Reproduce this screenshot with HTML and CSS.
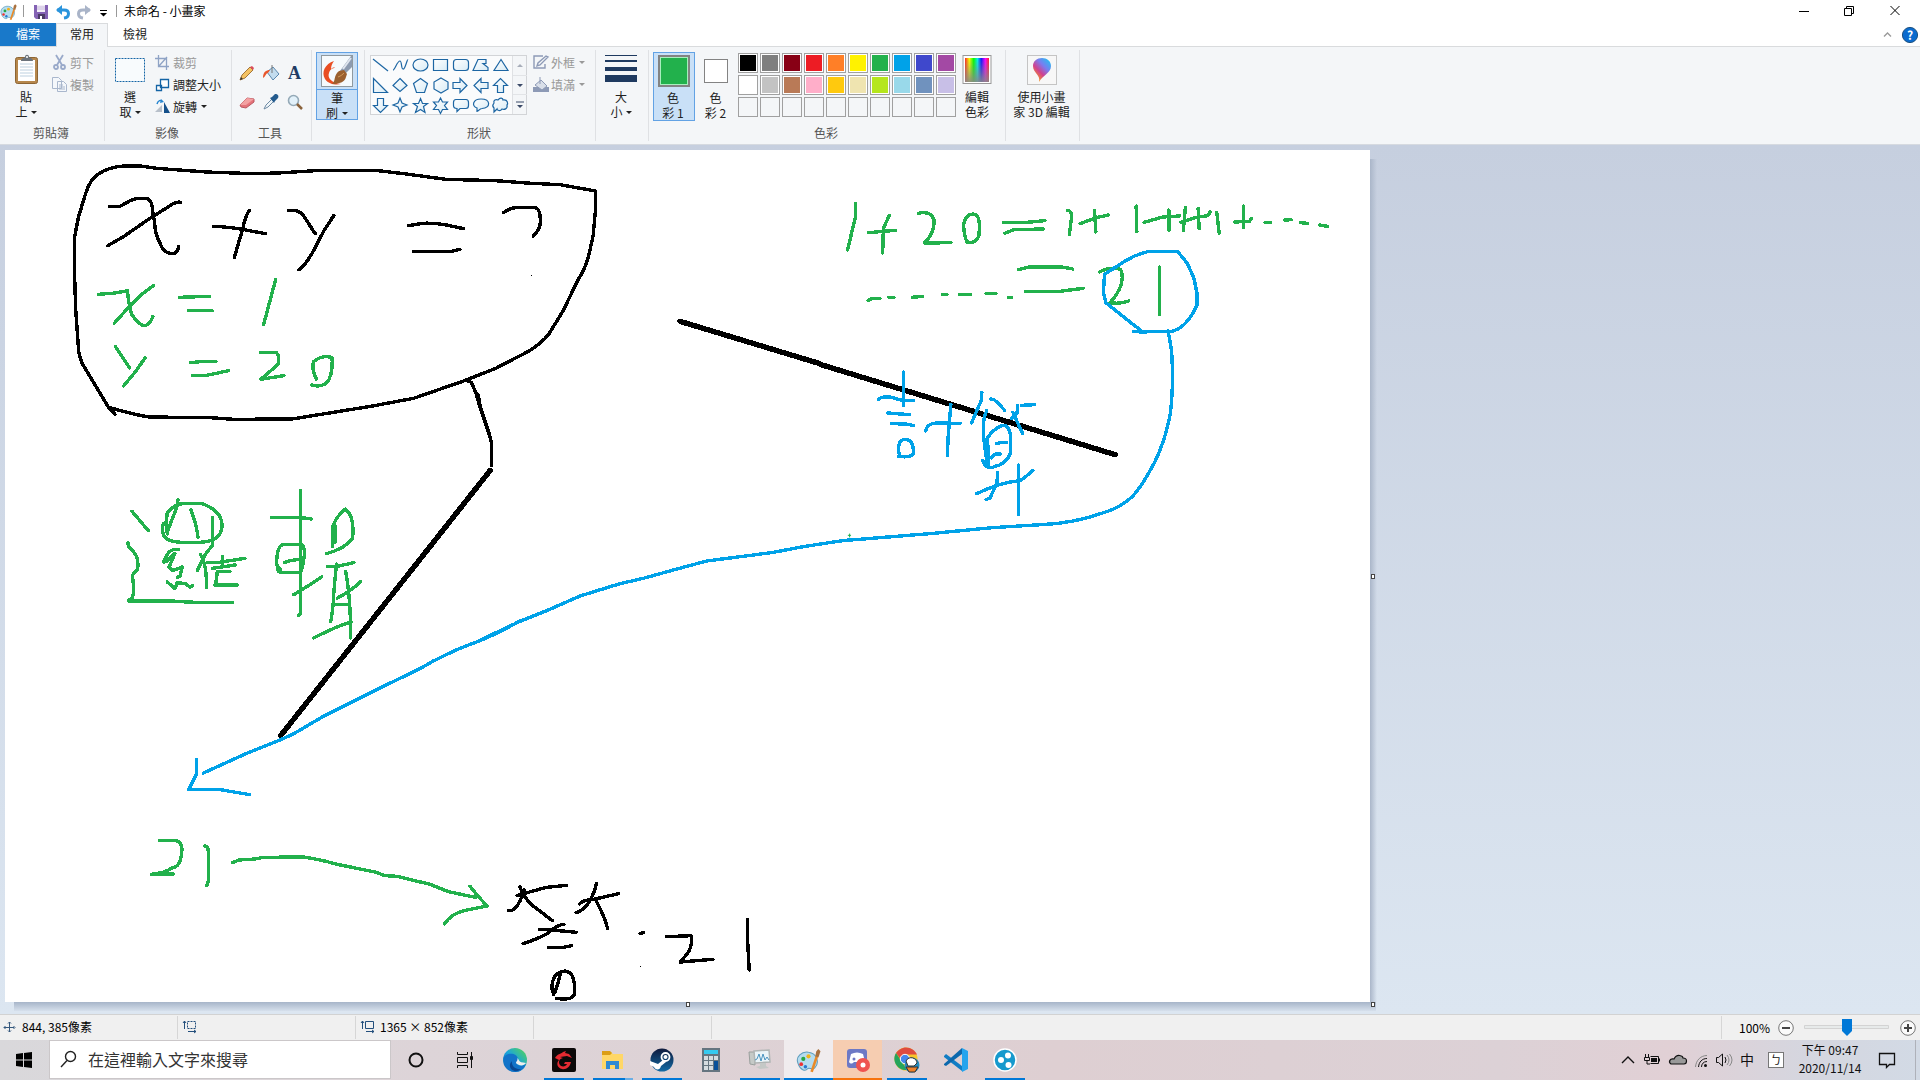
FILE: index.html
```html
<!DOCTYPE html>
<html lang="zh-Hant">
<head>
<meta charset="utf-8">
<title>未命名 - 小畫家</title>
<link rel="stylesheet" href="styles.css">
</head>
<body>
<svg class="defs" width="0" height="0">
  <defs>
    <linearGradient id="rainbow"><stop offset="0" stop-color="#f22"/><stop offset=".18" stop-color="#ff0"/><stop offset=".36" stop-color="#0f0"/><stop offset=".52" stop-color="#0ee"/><stop offset=".68" stop-color="#11f"/><stop offset=".85" stop-color="#f0f"/><stop offset="1" stop-color="#f22"/></linearGradient>
    <linearGradient id="fade" x2="0" y2="1"><stop offset="0" stop-color="#888" stop-opacity="0"/><stop offset="1" stop-color="#888" stop-opacity=".9"/></linearGradient>
    <linearGradient id="pin" x1="1" y1="0" x2=".2" y2="1"><stop offset="0" stop-color="#0fd0f0"/><stop offset=".4" stop-color="#7a7cf0"/><stop offset=".65" stop-color="#d04090"/><stop offset="1" stop-color="#ffb000"/></linearGradient>
    <linearGradient id="edge" x1="0" y1="1" x2="1" y2="0"><stop offset="0" stop-color="#0b58b0"/><stop offset=".5" stop-color="#1aa5dc"/><stop offset="1" stop-color="#5ad84c"/></linearGradient>
    <linearGradient id="steam" x2="0" y2="1"><stop offset="0" stop-color="#101a3c"/><stop offset="1" stop-color="#126ba5"/></linearGradient>
    <linearGradient id="shape" x2="1" y2="1"><stop offset="0" stop-color="#fff"/><stop offset="1" stop-color="#d8ebf5"/></linearGradient>
    <symbol id="palette" viewBox="0 0 24 24">
      <path d="M2 15C-1 8 6 3 12 4c8 1 11 10 6 15-3 3-5-1-7 1-2 3-7 1-9-5z" fill="#b5dcef" stroke="#5e9dbd"/>
      <circle cx="7" cy="10.500" r="2" fill="#28a745"/><circle cx="12" cy="8" r="2" fill="#f2b31b"/><circle cx="5" cy="15.500" r="1.800" fill="#e33"/><circle cx="9" cy="18" r="1.700" fill="#2779d0"/>
      <path d="M20 8l-5 15" stroke="#e98a28" stroke-width="2.500"/><path d="M18.500 8l1-5 2-2 2 2-2 6z" fill="#a9713f"/>
    </symbol>
  </defs>
</svg>
<div class="window">
  <header class="titlebar">
    <svg class="app-icon" width="17" height="18"><use href="#palette"/></svg>
    <i class="title-rule"></i>
    <svg class="qa-save" width="14" height="14"><path d="M0 0h14v14H2l-2-2z" fill="#8462b4"/><path d="M3 0h8v7H3z" fill="#f3eef8"/><path d="M3 2h8M3 4h8" stroke="#c6b8dc"/><path d="M4 9h7v5H4z" fill="#4b3c66"/><path d="M6 11h2v3H6z" fill="#fff"/></svg>
    <svg class="qa-undo" width="14" height="14"><path d="M1 5h7c6 0 6 7 0 8" fill="none" stroke="#2a94dc" stroke-width="3"/><path d="M0 5l6-5v10z" fill="#2a94dc"/></svg>
    <svg class="qa-redo" width="14" height="14"><path d="M13 5H6C0 5 0 12 6 13" fill="none" stroke="#a9b4c8" stroke-width="3"/><path d="M14 5L8 0v10z" fill="#a9b4c8"/></svg>
    <svg class="qa-more" width="7" height="7"><path d="M0 .5h7" stroke="#000"/><path d="M0 3h7L3.500 6.500z"/></svg>
    <i class="title-rule"></i>
    <h1>未命名 - 小畫家</h1>
    <svg class="controls" width="116" height="12" fill="none" stroke="#000"><path d="M0 6.500h10M45.500 3.500h7v7h-7zM47.500 3.500v-2h7v7h-2M91.500 1l9 9M100.500 1l-9 9"/></svg>
  </header>
  <nav class="tabs">
    <span class="tab file">檔案</span><span class="tab active">常用</span><span class="tab">檢視</span>
    <svg class="tab-tools" width="36" height="18"><path d="M1 10.500L4.500 7 8 10.500" fill="none" stroke="#999" stroke-width="1.300"/><circle cx="27" cy="9" r="7.600" fill="#0a6bce" stroke="#1c5180"/><text x="27" y="13.500" text-anchor="middle" fill="#fff" font-size="12" font-weight="bold">?</text></svg>
  </nav>
  <section class="ribbon">
    <div class="group clipboard">
      <div class="body">
        <div class="big">
          <svg width="26" height="32"><rect x="1.500" y="3.500" width="22" height="26" rx="2" fill="#b6874c" stroke="#8d6534"/><path d="M4 6h17v21H4z" fill="#fff"/><path d="M6 10h13M6 13h13M6 16h13M6 19h13M6 22h13" stroke="#bdd0df"/><path d="M7 7c0-3 3-3 4-4 0-3 4-3 4 0 1 1 4 1 4 4z" fill="#6b737b"/><circle cx="13" cy="3" r="1" fill="#fff"/></svg>
          <span>貼<br>上<b class="caret"></b></span>
        </div>
        <div class="rows muted">
          <div><svg width="15" height="15" fill="none" stroke="#9aaaca" stroke-width="1.800"><path d="M4 0l6 10M11 0L5 10"/><circle cx="4" cy="12" r="2"/><circle cx="11" cy="12" r="2"/></svg>剪下</div>
          <div><svg width="15" height="15" fill="#f4f7fb" stroke="#a9b7cd"><path d="M.5.500h6l3 3v8h-9zM5.500 4.500h6l3 3v7h-9z"/><path d="M7 8h4M7 10h6M7 12h6"/></svg>複製</div>
        </div>
      </div>
      <h2>剪貼簿</h2>
    </div>
    <div class="group image">
      <div class="body">
        <div class="big">
          <svg width="31" height="32"><rect x=".5" y="4.500" width="29" height="23" fill="#f8fbfd" stroke="#1464a5" stroke-dasharray="2 1"/></svg>
          <span>選<br>取<b class="caret"></b></span>
        </div>
        <div class="rows">
          <div class="muted"><svg width="15" height="15" fill="none" stroke="#8fa3c5"><path d="M3.500 0v11.500H14M0 3.500h11.500V15M4 11l8-9" stroke-width="1.300"/></svg>裁剪</div>
          <div><svg width="15" height="15" fill="#fff" stroke="#1464a5"><path d="M5.500 2.500h8v8h-8zM1.500 8.500h5v5h-5z" stroke-width="1.300"/></svg>調整大小</div>
          <div><svg width="15" height="15"><path d="M0 13l7-7v7z" fill="#b8c0ca"/><path d="M9 3l6 11H9z" fill="#15508a"/><path d="M2 5c1-4 4-4 5-3" fill="none" stroke="#2786d0" stroke-width="1.500"/><path d="M6 0l3 3-4 1z" fill="#2786d0"/></svg>旋轉<b class="caret"></b></div>
        </div>
      </div>
      <h2>影像</h2>
    </div>
    <div class="group tools">
      <div class="body">
        <svg width="16" height="16"><path d="M1 15l2-5L11 2l3 3-8 8z" fill="#f4c262" stroke="#a4763b"/><path d="M11 2l2-1 2 2-1 2z" fill="#dd4b5b"/><path d="M1 15l1-3 2 2z" fill="#333"/></svg>
        <svg width="16" height="16"><path d="M4 7l6-5 6 7-6 6z" fill="#c3dcee" stroke="#5a87ae"/><path d="M9 0v8" stroke="#777"/><path d="M0 13c0-6 3-8 7-8l-2 3c-2 0-2 3-5 5z" fill="#e8562c"/></svg>
        <span class="letter">A</span>
        <svg width="16" height="16"><path d="M1 11l7-7 7 1v3l-8 6-5-1z" fill="#e5737a" stroke="#ba5962"/><path d="M1 11l7-7 7 1-8 6z" fill="#f3a1a2"/></svg>
        <svg width="16" height="16"><path d="M1 15l2-4 6-6 2 2-6 6z" fill="#eef4f8" stroke="#6e8ba4"/><path d="M7 4l2-1 3-3c3 0 4 2 3 4l-3 3-1 2z" fill="#245b8e"/></svg>
        <svg width="16" height="16"><circle cx="6.500" cy="6.500" r="5" fill="#e2f1fa" stroke="#94a9b7" stroke-width="1.600"/><path d="M10 10l5 5" stroke="#8a633c" stroke-width="2.500"/></svg>
      </div>
      <h2>工具</h2>
    </div>
    <div class="group brush">
      <div class="picked">
        <svg width="32" height="32"><rect x=".5" y=".5" width="31" height="31" fill="#f5fafd" stroke="#8f999f"/><path d="M13 6C4 9 0 17 4 24c4 6 12 6 16 5-9-1-14-6-12-11 1-4 4-5 6-5-1-1-3 0-4 1 0-3 1-5 3-8z" fill="#e94e23"/><path d="M19 16L30 1h1v11l-8 8z" fill="#8c9bb0"/><path d="M22 14l8-11" stroke="#dfe5ee" stroke-width="2"/><path d="M18 16l5-1 3 4-1 3c-1 5-7 7-14 7 4-3 1-8 7-13z" fill="#9b602f"/><path d="M17 22c3-1 5-3 6-4" stroke="#d09a5a" fill="none"/></svg>
        <span>筆<br>刷<b class="caret"></b></span>
      </div>
    </div>
    <div class="group shapes">
      <div class="body">
        <div class="gallery">
          <svg width="141" height="58" fill="url(#shape)" stroke="#1d66a3" stroke-width="1.200">
            <path d="M3 3l15 12"/><path d="M23 14c2 0 4-9 7-9 2 0 1 8 3 8 2 1 4-10 5-9" fill="none"/><ellipse cx="50.500" cy="9" rx="7.500" ry="6"/><path d="M63.500 3.500h14v11h-14z"/><rect x="83.500" y="3.500" width="15" height="11" rx="3"/><path d="M103 14.500l5-11h8v4h-3l5 4v3z"/><path d="M131 3.500l7 11h-14z"/>
            <path d="M3.500 22.500v14h14z"/><path d="M30 22.500l7 7-7 6-7-6z"/><path d="M50.500 22.500l7 5-3 9h-8l-3-9z"/><path d="M71 22l7 4v7l-7 4-7-4v-7z"/><path d="M83 26.500h7v-4l7 7-7 7v-4h-7z"/><path d="M118 26.500h-7v-4l-7 7 7 7v-4h7z"/><path d="M127.500 36.500v-7h-4l7-7 7 7h-4v7z"/>
            <path d="M7.500 42.500v7h-4l7 7 7-7h-4v-7z"/><path d="M30 42l2 5 5 2-5 2-2 5-2-5-5-2 5-2z"/><path d="M50.500 42.500l2 5h5l-4 3 1.500 6-4.500-3-5 3 2-6-4-3h5z"/><path d="M70.500 42l2 4h5l-3 3.500 3 4h-5l-2 4-2-4h-5l3-4-3-3.500h5z"/><path d="M86 43.500h10q2.500 0 2.500 3v3q0 3-2.500 3h-6l-3 3v-3q-3.500 0-3.500-3v-3q0-3 2.500-3z"/><path d="M107 52c-6-2-4-9 4-9 10 0 10 9 1 9.500-3 0-3 3-5 3z"/><path d="M128 44c2-3 5-2 5 0 5-1 5 4 4 5 1 4-3 5-5 4-2 3-5 1-5 0l-3 3v-4c-3-3 0-4 0-5-1-3 2-4 4-3z"/>
          </svg>
          <svg class="scroll" width="14" height="58"><path d="M0 19.500h14M0 38.500h14" stroke="#e2e4e7"/><path d="M4 11h6L7 8z" fill="#a7adb9"/><path d="M4 28h6l-3 3zM4 49h6l-3 3z" fill="#3b4a68"/><path d="M3 46h8" stroke="#3b4a68"/></svg>
        </div>
        <div class="rows muted">
          <div><svg width="16" height="15" fill="none" stroke="#8d9ab6" stroke-width="1.400"><path d="M10 1H1v12h11V9M4 11l1-3 8-7 2 1-8 8z"/></svg>外框<b class="caret"></b></div>
          <div><svg width="16" height="15"><path d="M0 10h16v5H0z" fill="#8d9ab6"/><path d="M2 8l6-5 6 6-5 4z" fill="#d9dfe9" stroke="#8d9ab6"/><path d="M7 0v7" stroke="#8d9ab6"/></svg>填滿<b class="caret"></b></div>
        </div>
      </div>
      <h2>形狀</h2>
    </div>
    <div class="group size">
      <div class="big">
        <svg width="32" height="32" fill="#1f3a60"><path d="M0 1h32v1H0zM0 6h32v2H0zM0 13h32v4H0zM0 21h32v7H0z"/></svg>
        <span>大<br>小<b class="caret"></b></span>
      </div>
    </div>
    <div class="group colors">
      <div class="body">
        <div class="color picked"><i class="swatch green"></i><span>色<br>彩 1</span></div>
        <div class="color second"><i class="swatch white"></i><span>色<br>彩 2</span></div>
        <div class="palette">
          <i class="k1"></i><i class="k2"></i><i class="k3"></i><i class="k4"></i><i class="k5"></i><i class="k6"></i><i class="k7"></i><i class="k8"></i><i class="k9"></i><i class="k10"></i>
          <i class="k11"></i><i class="k12"></i><i class="k13"></i><i class="k14"></i><i class="k15"></i><i class="k16"></i><i class="k17"></i><i class="k18"></i><i class="k19"></i><i class="k20"></i>
          <i></i><i></i><i></i><i></i><i></i><i></i><i></i><i></i><i></i><i></i>
        </div>
        <div class="big edit">
          <svg width="30" height="32"><rect x="1" y="1.500" width="28" height="28" fill="#fff" stroke="#999"/><path d="M3 4h24v24H3z" fill="url(#rainbow)"/><path d="M3 4h24v24H3z" fill="url(#fade)"/></svg>
          <span>編輯<br>色彩</span>
        </div>
      </div>
      <h2>色彩</h2>
    </div>
    <div class="group paint3d">
      <div class="big">
        <svg width="30" height="32"><rect x=".5" y="1.500" width="29" height="29" fill="#f7f7f7" stroke="#c4c4c4"/><path d="M12 28c2-7-6-9-6-16C6 7 10 4 15 4s9 3 9 8c0 7-8 9-12 16z" fill="url(#pin)"/></svg>
        <span>使用小畫<br>家 3D 編輯</span>
      </div>
    </div>
  </section>
  <main class="workspace">
    <div class="sheet">
      <svg class="drawing" width="1365" height="852" viewBox="5 150 1365 852">
        <g class="ink" transform="translate(60 150) scale(.35714 .33333)">
          <path d="M154 793L136 772 62 640Q53 615 52 600L44 480 41 380V260L52 200 72 130Q85 85 110 70 140 50 180 48H225L270 55 410 66 540 71 610 69 730 61 890 62 970 72 1080 88 1220 92 1320 100 1400 104 1499 123V185L1493 255 1482 310Q1470 360 1450 390L1410 480 1370 550Q1350 580 1310 605L1220 655 1130 693 990 745 870 769 650 807 485 808 420 803 250 801Q210 795 136 772"/>
          <path d="M1138 692l14 5q14 30 20 60l34 112"/>
          <path d="M138 169h30l25-15q15-9 30-9h22q15 12 14 38 7 30 8 60 8 30 20 52 12 16 27 16 15 2 18-22M134 287l45-28 70-52 68-46q10-6 21-4M430 229q45 2 80 9l66 13M530 181q-14 25-18 55-13 45-24 87M640 181h18q17 3 30 26l22 37 6 6M767 196l-28 46-29 60q-20 40-41 57M976 227l38-7q35-2 68 5l48 11M989 304h107l24-6M1242 188q15-13 38-16h50q15 4 15 40 1 25-20 46"/>
          <path class="dot" d="M1318 376h3"/>
          <g class="green"><path d="M107 433l48-4 34-7q3 40 11 70 23 36 38 35 14-3 22-28M152 520q40-50 78-88l32-26M334 442l84-3M360 482h66M604 388l-24 96-10 40M155 590l40 64M238 624l-26 40-34 44M366 638l26-3h45M371 677h36l65-15M561 607h45q10 12 4 37l-48 44 65-11M718 687q-14-30-8-52 25-22 52-12 2 55-15 75-18 15-43 7"/></g>
        </g>
        <g class="ink" transform="translate(820 190) scale(.34439 .33333)">
          <g class="green"><path d="M103 40v40l-23 100M140 128l80-7M201 76l-17 40-2 73M286 70q37-9 45 20 3 38-28 69l77-1M426 156q-9-25-9-50 3-32 27-34 25 0 17 66-10 24-32 18M533 97h68l52-5M537 130l25-11 87-2M718 61q16 0 11 32l-5 41M755 101l44-17 37-9M797 61l4 65M918 48l2 77M941 97l55-16 49-3M1013 60v61M1061 52l-6 69M1048 97l40-14 38-6 7-11M1098 55l3 61M1152 67l7 62M1203 96l44-2 6-8M1230 48v65M1292 98h16M1350 90l18-1M1395 98l20 2M1450 105l24 4M140 331l12-6h22M200 322h15M268 322l30-3M355 314h14M405 314h32M482 310h29M547 322h10M577 239l30-8h95l32 6M596 304h100l68-9M812 246q27-17 61-8 18 45-31 100 30 5 54-5M986 231v142"/></g>
          <path class="heavy" d="M0 523l857 271"/>
          <g class="blue"><path d="M925 424h10l-30-24-75-62-7-30 3-55 60-40q35-22 70-29h82l28 35 20 46 9 47v33q-20 45-45 65-25 20-58 14l-60 2-22-2M1011 423l10 60 3 70q-2 95-9 130-15 75-43 133-35 70-65 104-40 37-90 50-80 30-175 34L500 1013 330 1030 66 1052M243 546v100M170 629q7-10 32-8l42 11 27-1M197 669l63 5M207 701l44 1 20 5M231 799q-9-45 12-51 31-2 28 44-12 12-42 7M307 723q3-22 30-24l70 1M380 643l-8 100-2 54M470 607l-2 25-28 67M496 627q10-4 40 34M585 646l37-2M574 646l-2 25-16 15M560 667l28 63M484 662q-13 30-9 77l6 50 5 40M472 812l18 20V770M472 812q13 30 34 18 35-7 48-42v-50q-6-35-24-32-24 8-44 38v40M512 761q15-5 30-3M498 804q7-15 26-12M516 847l-2 30-20 47-12 5M455 911q65-33 125-39 15-8 38-31M577 825v148"/></g>
          <path class="green tiny" d="M82 1036h7m-3-4v9"/>
        </g>
        <g class="ink" transform="translate(440 300) scale(.33333)">
          <path d="M115 285l6 35 28 86 6 26v65"/>
          <path class="heavy" d="M720 64l420 127"/>
          <path class="blue" d="M1236 719L1200 723 1090 740 1000 757 940 765 800 783 700 810 610 835 540 851 420 888 320 932 240 964 115 1023"/>
        </g>
        <g class="ink" transform="translate(100 460) scale(.33333)">
          <path class="heavy" d="M1170 32L542 827"/>
          <path class="blue" d="M1260 483L1200 515 1150 538 1070 569 1000 603 960 626 840 684 670 769 580 822 540 840 440 880 310 939M290 898v43l-12 25-12 23h95l88 15"/>
          <g class="green"><path d="M96 154l49 58M84 248q-1 12 10 20 19 20 19 35 2 24-2 28-15 10-13 20 5 45 0 60l-13 12h130q70 6 183 5M202 222q-5-35 0-65 25-25 45-26h60q60 23 59 65 0 45-55 50-35 4-68 1-50-3-54-27-5-35 10-30M234 118l-4 25-28 72M273 149q18 50 21 82M337 173v75M338 255l-22 28-24 48M302 284q20 35 17 99M235 269q-22-5-35 17l-9 20 12-4 22-22-18 42 10 10 30-11-7 27-7 4M202 366l23 20 6-18 25 3 14 10 8-4M323 307h35l77-12M368 290v28M337 325l68-10M347 375l5-40h38M343 375h69M514 173h90l30 4M602 91v370l-6 5M542 328q-14-5-12-27 3-45 20-48h56q10 10 6 40-5 40-12 44h-60q-7-3-6-12M553 308q25-10 55-10M581 404q50-30 84-53M698 260V200q10-30 38-53 30 25 21 90-22 28-77 44M682 320h25l55-12M710 312q-8 65-10 115-4 40-8 58M737 335q15 75 15 199M712 414q40-20 70-49M709 433h31M641 534q75-38 112-48"/><path d="M703 200v45" class="wide"/></g>
        </g>
        <g class="ink" transform="translate(130 820) scale(.40816 .33333)">
          <g class="green"><path d="M73 61h37q19 5 17 30-2 50-24 53-18 15-50 19l54-1M182 78q10-2 10 20v85l-4 14M251 128l16-8 40-3 20-5 98-1q45 8 75 20l100 25 25 11 30 2 80 24 45 22 66 17M833 199l20 30 22 29-50 12q-38 10-55 42"/></g>
          <path d="M955 200q10 35 35 60l45 42M948 227q30-11 72-25l50-6M966 210q-17 65-38 62M1143 190q-4 25-15 50-15 32-35 38M1101 252q8-12 35-14l61-17M1143 245q20 45 27 80M1063 313q-15 0-40 27-20 15-60 31M1003 328l40 3 50 6M1025 382h38l19-5M1054 463q-10 50-16 60-10-25 3-55 20-23 36-10 15 15 12 65-7 20-44 12M1250 341l8-3M1315 350l60-3q4 30-10 55l-17 24 80-8M1513 298v60l4 92"/>
          <path class="dot" d="M1250 441h3"/>
        </g>
      </svg>
      <i class="handle right"></i><i class="handle bottom"></i><i class="handle corner"></i>
    </div>
  </main>
  <footer class="status">
    <div class="cell c1"><svg width="12" height="12" fill="none" stroke="#36597e"><path d="M6.500 1v10M1 6.500h10M5 2.500L6.500 1 8 2.500M5 9.500L6.500 11 8 9.500M2.500 5L1 6.500 2.500 8M10.500 5L12 6.500 10.500 8"/></svg>844, 385像素</div>
    <div class="cell c2"><svg width="14" height="13" fill="none" stroke="#234f7c"><path d="M1.500 9V1M0 3l1.500-2L3 3M5 11.500h8M11 10l2 1.500-2 1.500"/><path d="M4.500 1.500h8v7h-8z" stroke-dasharray="2 1"/></svg></div>
    <div class="cell c3"><svg width="14" height="13" fill="none" stroke="#234f7c"><path d="M1.500 9V1M0 3l1.500-2L3 3M5 11.500h8M11 10l2 1.500-2 1.500M4.500 1.500h8v7h-8z"/></svg>1365 × 852像素</div>
    <div class="cell c4"></div>
    <div class="cell c5"></div>
    <div class="zoom">100%
      <svg width="138" height="22"><g fill="#fafafa" stroke="#777"><circle cx="8" cy="12" r="7.300"/><circle cx="130" cy="12" r="7.300"/></g><path d="M4 12h8M126 12h8M130 8v8" stroke="#444" stroke-width="2"/><path d="M26.500 9.500h84v3h-84z" fill="#e7eaea" stroke="#d3d3d3"/><path d="M64 3h10v12l-5 5-5-5z" fill="#0078d7"/></svg>
    </div>
  </footer>
  <footer class="taskbar">
    <div class="start"><svg width="16" height="16"><path d="M0 2l7-1v6.500H0zM8 1l8-1v7.500H8zM0 8.500h7V15l-7-1zM8 8.500h8V16l-8-1z"/></svg></div>
    <div class="search"><svg width="18" height="18" fill="none" stroke="#222" stroke-width="1.400"><circle cx="10.500" cy="6.500" r="5"/><path d="M7 10.500L1 17"/></svg>在這裡輸入文字來搜尋</div>
    <div class="apps">
      <span class="slim"><svg width="18" height="18"><circle cx="9" cy="9" r="6.500" fill="none" stroke="#111" stroke-width="2"/></svg></span>
      <span class="slim"><svg width="18" height="16" fill="none" stroke="#111"><path d="M1.500 0v2.500h10V0M1.500 5.500h10v5h-10zM1.500 16v-2.500h10V16M15.500 0v16"/><path d="M14.500 4.500h2v3h-2z" fill="#111"/></svg></span>
      <span><svg width="24" height="24"><circle cx="12" cy="12" r="12" fill="url(#edge)"/><path d="M1 9C5 4 14 5 15 11c0 3-2 3-1 5 2 3 8 2 9-1-1 6-6 9-11 9C5 24 0 18 1 9z" fill="#1273c9"/><path d="M9 13c-1 5 4 9 9 8-7 6-15-2-9-8z" fill="#0a4792"/><path d="M14 16c-3-2 2-3 0-6 4 3 0 4 9 5-2 3-6 3-9 1z" fill="#eee"/></svg></span>
      <span class="run"><svg width="24" height="24"><rect width="24" height="24" rx="2" fill="#0c0909"/><path d="M3 10c2-4 6-4 8-6l3-1-1 2 4 1 3 4-5-2-7 1 3 1c-4 1-5 4-3 7 1 2 6 2 7-1h-3l1-2h6c-1 5-5 8-9 7-5-1-6-6-3-9l-2-1z" fill="#e52a31"/></svg></span>
      <span class="run multi"><svg width="22" height="20"><path d="M0 2h9l2 2h10v15H0z" fill="#ffd767"/><path d="M0 1h8l2 2-2 2H0z" fill="#dc9e15"/><path d="M4 19v-8h13v8h-4v-4H8v4z" fill="#2f8ad3"/></svg></span>
      <span class="run"><svg width="24" height="24"><circle cx="12" cy="12" r="11.500" fill="url(#steam)"/><circle cx="15.500" cy="9" r="4" fill="none" stroke="#fff" stroke-width="1.800"/><circle cx="15.500" cy="9" r="2" fill="#fff"/><path d="M0 13l8 3 5-4 3 2-5 4c-1 5-6 4-7 1l-4-2z" fill="#fff"/></svg></span>
      <span><svg width="18" height="24"><path d="M0 0h18v24H0z" fill="#657580"/><path d="M2 2h14v4H2z" fill="#35caf0"/><path d="M2 8h4v4H2zM7 8h4v4H7zM12 8h4v4h-4zM2 13h4v4H2zM7 13h4v4H7zM2 18h4v4H2zM7 18h4v4H7z" fill="#d5dce0"/><path d="M12 13h4v9h-4z" fill="#08519a"/></svg></span>
      <span class="run"><svg width="24" height="22"><path d="M1 3h6v13l-5-1z" fill="#c5cac7" stroke="#9aa09d"/><path d="M6 2l15-1 1 12-15 1z" fill="#eaf4f8" stroke="#b0b5b4" stroke-width="1.500"/><path d="M7 11l2-1 2-5 2 7 2-7 2 6 2-3 2 3" fill="none" stroke="#4a94bf"/><path d="M12 14h6v3l3 2-9 1-4-2 4-1z" fill="#c4c8c6"/></svg></span>
      <span class="run paint"><svg width="25" height="25"><use href="#palette"/></svg></span>
      <span class="run alert"><svg width="25" height="24"><rect x="2" y="1" width="20" height="19" rx="3" fill="#6d79c5"/><path d="M6 6c4-2 8-2 12 0l2 8c-3 3-4 1-5 0H9c-1 1-3 3-5 0z" fill="#fff"/><circle cx="9" cy="11" r="1.500" fill="#6d79c5"/><circle cx="18" cy="17" r="7" fill="#ef5350"/><circle cx="18" cy="17" r="2.500" fill="#fff"/></svg></span>
      <span class="run"><svg width="26" height="26"><circle cx="12" cy="12" r="11.500" fill="#f7c52c"/><path d="M12 .5c5 0 9 3 11 7H12L8 14 2 6c2-3 6-5.500 10-5.500z" fill="#df4b3f"/><path d="M2 6l6 9 5 8C4 24-3 14 2 6z" fill="#25a45c"/><circle cx="11" cy="12" r="4.700" fill="#4587ed" stroke="#fff"/><circle cx="18" cy="18" r="7.500" fill="#248bbd"/><path d="M12 14c3-6 11-3 11 2l-3 3h-6z" fill="#fff" stroke="#333"/><path d="M12 20h12l-3 5h-6z" fill="#ee812b" stroke="#333"/></svg></span>
      <span><svg width="24" height="24"><path d="M0 8l2-2 16 12v5L0 9z" fill="#117dc4"/><path d="M0 16L18 0v6L2 18l-2-1z" fill="#0b68ad"/><path d="M18 0l6 3v18l-6 3z" fill="#25a4ed"/></svg></span>
      <span class="run"><svg width="24" height="24"><circle cx="12" cy="12" r="11" fill="#1699cd" stroke="#fff" stroke-width="1.500"/><circle cx="8" cy="12" r="3" fill="#fff"/><circle cx="15" cy="7.500" r="3" fill="#fff"/><circle cx="15.500" cy="17" r="3" fill="#fff"/></svg></span>
    </div>
    <div class="tray">
      <svg width="118" height="20" fill="none" stroke="#111">
        <path d="M2 13l6-6 6 6" stroke-width="1.400"/>
        <path d="M30.500 6.500h8v7h-8M39.500 8.500v3M25.500 4v3M28.500 4v3M24.500 7.500h5v3h-5zM27 10v4h3"/><path d="M31 8h6v4h-6z" fill="#111" stroke="none"/>
        <path d="M51 14c-3-2-1-6 3-5 3-6 9-3 9-1 5 0 4 6 1 6z" fill="#999" stroke-width="1.200"/>
        <g stroke="#888"><path d="M75.500 17C76 10 81 5.500 87 5.500"/><path d="M78.500 17C79 12 82 8.500 87 8.500" stroke="#111"/><path d="M81.500 17c0-3 2-5.500 5.500-5.500" stroke="#111"/></g><circle cx="85.500" cy="15.500" r="1.500" fill="#111" stroke="none"/>
        <path d="M96.500 7.500h2l4-3.500v12l-4-3.500h-2zM105 7q2 3 0 6"/><path d="M107 5q4 5 0 10M109.500 4q5 6 0 12" stroke="#888"/>
      </svg>
      <b class="ime">中</b><span class="mode">ㄅ</span>
      <div class="clock">下午 09:47<br>2020/11/14</div>
      <svg class="note" width="18" height="18" fill="none" stroke="#111" stroke-width="1.300"><path d="M1.500 2.500h15v11h-5l-3 3v-3h-7z"/></svg>
      <i class="peek"></i>
    </div>
  </footer>
</div>
</body>
</html>
```
FILE: styles.css
```css
* { box-sizing: border-box; }
body { margin: 0; overflow: hidden; font-family: "Noto Sans CJK TC", "Noto Sans", sans-serif; font-size: 12px; color: #222; }
svg { display: block; flex: none; overflow: visible; }
h1, h2 { margin: 0; font-weight: normal; font-size: 12px; }
i { font-style: normal; }
.defs { position: absolute; }
.window { display: grid; grid-template-rows: 23px 24px 98px 869px 26px 40px; width: 1920px; height: 1080px; background: #fff; }

.titlebar { display: flex; align-items: center; }
.app-icon { margin-right: -1px; }
.title-rule { width: 1px; height: 12px; margin: 0 10px 2px 7px; background: #999; }
.qa-undo { margin-left: 8px; }
.qa-redo { margin-left: 7px; }
.qa-more { margin: 4px 0 0 9px; }
.qa-more + .title-rule { margin: 0 7px 2px 9px; }
.titlebar h1 { line-height: 20px; margin-bottom: 2px; color: #000; }
.controls { margin: -2px 5px 0 auto; }

.tabs { display: flex; }
.tab { width: 56px; text-align: center; line-height: 22px; border-bottom: 1px solid #d9dbdd; }
.tab:last-of-type { flex: 1; text-align: left; padding-left: 15px; }
.tab.file { height: 24px; background: #1979ca; color: #fff; background-clip: padding-box; }
.tab.active { width: 52px; background: #f4f6f8; border: 1px solid #d9dbdd; border-bottom: 0; line-height: 20px; }
.tab-tools { width: 37px; height: 24px; padding-top: 3px; border-bottom: 1px solid #d9dbdd; }

.ribbon { display: grid; grid-template-columns: 105px 127px 80px 53px 231px 53px 357px 74px; background: #f4f6f8; border-bottom: 1px solid #d6dae0; }
.group { display: flex; flex-direction: column; justify-content: space-between; margin: 3px 0; border-right: 1px solid #dfe1e4; height: 91px; }
.group .body { display: flex; }
.group h2 { text-align: center; line-height: 18px; color: #555; padding-right: 2px; margin-bottom: -1px; }
.big { display: flex; flex-direction: column; align-items: center; text-align: center; line-height: 15px; padding-top: 4px; }
.big span { margin-top: 3px; white-space: nowrap; }
.caret { display: inline-block; margin-left: 4px; vertical-align: 3px; border: 3px solid transparent; border-top-color: currentColor; border-bottom: 0; }
.big .caret { margin-left: 3px; }
.rows > div { display: flex; align-items: center; height: 22px; white-space: nowrap; }
.rows svg { margin-right: 3px; }
.rows .caret { margin-top: 1px; align-self: center; }
.muted { color: #999; }
.clipboard .big { width: 52px; }
.clipboard .big svg { transform: translateX(1px); }
.clipboard .rows, .image .rows { padding-top: 1px; }
.image .big { width: 50px; }
.tools .body { display: grid; grid-template-columns: 16px 16px 16px; column-gap: 8px; row-gap: 13px; padding: 15px 0 0 7px; }
.tools .letter { font: bold 18px/16px "Liberation Serif", serif; color: #213b63; padding-left: 1px; }
.tools h2 { padding-right: 3px; }
.picked { background: #c9e0f7; border: 1px solid #62a2e4; }
.brush { padding: 2px 0 0 4px; }
.brush .picked { width: 42px; height: 68px; display: flex; flex-direction: column; align-items: center; padding-top: 2px; line-height: 15px; text-align: center; }
.brush .picked span { border-top: 1px solid #62a2e4; width: 40px; margin-top: 2px; }
.gallery { display: flex; margin: 5px 6px 0 5px; width: 157px; height: 60px; border: 1px solid #d2d4d7; background: #fafbfc; }
.gallery > svg:first-child { margin-left: -1px; margin-right: 1px; }
.gallery .scroll { background: #f4f6f8; border-left: 1px solid #dfe1e4; }
.shapes .rows { padding-top: 1px; }
.shapes .rows svg { margin-right: 2px; }
.size .big { padding: 4px 2px 0 0; }
.color { display: flex; flex-direction: column; align-items: center; line-height: 15px; text-align: center; width: 42px; height: 69px; margin: 2px 0 0 4px; padding-top: 2px; }
.color span { margin-top: 4px; }
.color.picked span { margin: 3px 2px 0 0; }
.swatch { width: 32px; height: 32px; border: 2px solid #838383; }
.swatch.green { background: #22b14c; box-shadow: inset 0 0 0 1px #a8efbe; }
.swatch.white { width: 24px; height: 24px; margin: 5px 0 3px; background: #fff; border-width: 1px; }
.color.second { margin-left: 0; width: 41px; padding-top: 2px; }
.palette { display: grid; grid-template-columns: repeat(10, 20px); grid-auto-rows: 20px; gap: 2px; margin: 3px 6px 0 2px; }
.palette i { border: 1px solid #a0a0a0; padding: 1px; background-clip: content-box; }
.palette i:nth-child(-n+20) { box-shadow: inset 0 0 0 1px #fff; }
.k1 { background-color: #000; }
.k2 { background-color: #7f7f7f; }
.k3 { background-color: #880015; }
.k4 { background-color: #ed1c24; }
.k5 { background-color: #ff7f27; }
.k6 { background-color: #fff200; }
.k7 { background-color: #22b14c; }
.k8 { background-color: #00a2e8; }
.k9 { background-color: #3f48cc; }
.k10 { background-color: #a349a4; }
.k11 { background-color: #fff; }
.k12 { background-color: #c3c3c3; }
.k13 { background-color: #b97a57; }
.k14 { background-color: #ffaec9; }
.k15 { background-color: #ffc90e; }
.k16 { background-color: #efe4b0; }
.k17 { background-color: #b5e61d; }
.k18 { background-color: #99d9ea; }
.k19 { background-color: #7092be; }
.k20 { background-color: #c8bfe7; }
.paint3d .big { padding-right: 2px; }

.workspace { padding: 5px; background: linear-gradient(#c6cfdf, #dce6f1); }
.sheet { position: relative; width: 1365px; height: 852px; background: #fff; }
.sheet::before { content: ""; position: absolute; left: 9px; right: -6px; bottom: -9px; height: 9px; background: linear-gradient(#a7b5c9, #d6e0ec); }
.sheet::after { content: ""; position: absolute; left: 1365px; top: 9px; bottom: 0; width: 7px; background: linear-gradient(90deg, #aab6c9, rgba(198, 207, 223, 0)); }
.drawing { shape-rendering: crispEdges; }
.ink path { fill: none; stroke: #000; stroke-width: 3.4px; stroke-linecap: round; stroke-linejoin: round; vector-effect: non-scaling-stroke; }
.ink .green path, .ink path.green { stroke: #22b14c; }
.ink .blue path, .ink path.blue { stroke: #00a2e8; }
.ink path.heavy { stroke-width: 5.4px; }
.ink .green path.wide { stroke-width: 5px; }
.ink path.tiny { stroke-width: 1px; }
.ink path.dot { stroke-width: 1px; stroke-linecap: butt; }
.handle { position: absolute; z-index: 1; width: 4px; height: 5px; background: #fff; border: 1px solid #444; }
.handle.right { left: 1366px; top: 424px; }
.handle.bottom { left: 681px; top: 852px; }
.handle.corner { left: 1366px; top: 852px; }

.status { display: flex; background: #f0f0f0; border-top: 1px solid #d2d2d2; color: #000; }
.cell { display: flex; align-items: center; gap: 7px; padding: 0 0 2px 3px; margin: 1px 0; border-right: 1px solid #d6d6d6; line-height: 22px; white-space: nowrap; }
.c1 { width: 178px; }
.c2, .c3, .c4, .c5 { width: 178px; padding-left: 5px; }
.c3 { gap: 5px; }
.c5 { width: 1010px; }
.zoom { display: flex; align-items: center; gap: 8px; padding: 0 0 1px 17px; }

.taskbar { display: flex; background: linear-gradient(90deg, #d9d8db 0, #ddd4d8 22%, #decfd2 55%, #dcd1d6 78%, #e1d0d5 87%, #d5d6df 94%, #d2dae5); }
.start { width: 49px; padding: 12px 0 0 16px; }
.search { display: flex; align-items: center; gap: 10px; width: 342px; height: 39px; padding: 0 0 2px 10px; background: #fff; border: 1px solid #cbc7c9; font-size: 16px; color: #333; }
.apps { display: flex; margin-left: 1px; }
.apps span { position: relative; display: flex; align-items: center; justify-content: center; width: 49px; height: 40px; }
.apps .slim { padding-right: 2px; }
.apps .run::after { content: ""; position: absolute; left: 5px; right: 4px; bottom: 0; height: 2px; background: #0078d7; }
.apps .multi::after { background: linear-gradient(90deg, #0078d7 80%, #6aaee5 80%); }
.apps .paint { background: #f0ecee; }
.apps .alert { background: #f6cdb1; }
.apps .paint::after, .apps .alert::after { left: 0; right: 0; }
.apps .alert::after { background: #f7730c; }
.tray { display: flex; align-items: center; margin-left: auto; color: #111; }
.ime { width: 14px; margin: 0 14px 2px 2px; font-size: 14px; line-height: 20px; font-weight: normal; }
.mode { width: 16px; height: 16px; border: 1px solid #777; background: #fff; font-size: 11px; line-height: 13px; text-align: center; }
.clock { width: 66px; margin: 0 15px 2px 13px; text-align: center; line-height: 18px; white-space: nowrap; }
.peek { width: 1px; height: 40px; margin: 0 4px 0 19px; background: #aeb1b9; }
```
